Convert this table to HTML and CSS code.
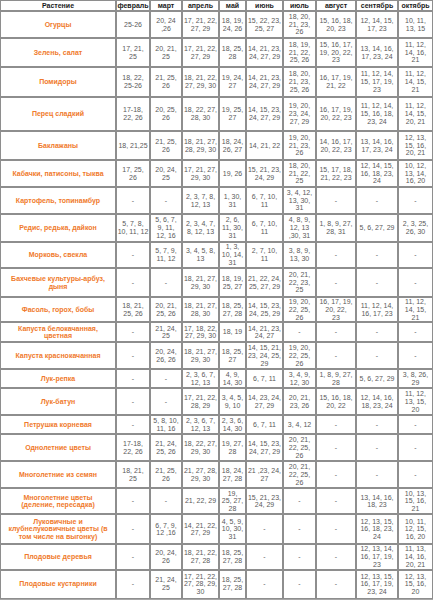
FILE: index.html
```html
<!DOCTYPE html>
<html lang="ru">
<head>
<meta charset="utf-8">
<title>Лунный календарь посева</title>
<link rel="stylesheet" href="styles.css">
</head>
<body>
<table class="cal">
<colgroup>
<col class="w0"><col class="w1"><col class="w2"><col class="w3"><col class="w4"><col class="w5"><col class="w6"><col class="w7"><col class="w8"><col class="w9">
</colgroup>
<thead>
<tr class="h11"><th>Растение</th><th>февраль</th><th>март</th><th>апрель</th><th>май</th><th>июнь</th><th>июль</th><th>август</th><th>сентябрь</th><th>октябрь</th></tr>
</thead>
<tbody>
<tr class="h27"><td class="p">Огурцы</td><td>25-26</td><td>20, 24<br>,26</td><td>17, 21, 22,<br>27, 29</td><td>18, 19,<br>24, 26</td><td>15, 22, 23,<br>25, 27</td><td>18, 20,<br>21, 23,<br>26</td><td>15, 16, 18,<br>20, 23</td><td>12, 14, 15,<br>17, 23</td><td>10, 11,<br>13, 15</td></tr>
<tr class="h29"><td class="p">Зелень, салат</td><td>17, 21,<br>25</td><td>20, 21,<br>25</td><td>17, 21, 22,<br>27, 29</td><td>18, 25,<br>28</td><td>14, 21, 23,<br>24, 27, 29</td><td>18, 19,<br>21, 22,<br>25, 26</td><td>15, 16, 17,<br>19, 20, 22,<br>23</td><td>13, 14, 16,<br>17, 23, 24</td><td>11, 12,<br>14, 16,<br>21</td></tr>
<tr class="h30"><td class="p">Помидоры</td><td>18, 22,<br>25-26</td><td>21, 25,<br>26</td><td>18, 21, 22,<br>27, 29, 30</td><td>19, 24,<br>27</td><td>14, 21, 23,<br>24, 27, 29</td><td>18, 20,<br>21, 23,<br>25, 26</td><td>16, 17, 19,<br>21, 22</td><td>11, 12, 14,<br>15, 17, 19,<br>23</td><td>11, 12,<br>14, 15,<br>21</td></tr>
<tr class="h34"><td class="p">Перец сладкий</td><td>17-18,<br>22, 26</td><td>20, 25,<br>26</td><td>18, 22, 27,<br>28, 30</td><td>19, 25,<br>27</td><td>14, 15, 23,<br>24, 27, 29</td><td>19, 20,<br>23, 24,<br>27, 29</td><td>16, 17, 19,<br>20, 22, 23</td><td>11, 12, 14,<br>15, 16, 18,<br>23, 24</td><td>11, 12,<br>14, 15,<br>20, 21</td></tr>
<tr class="h29"><td class="p">Баклажаны</td><td>18, 21,25</td><td>21, 25,<br>26</td><td>18, 21, 27,<br>28, 29, 30</td><td>18, 24,<br>26, 27</td><td>14, 21, 22</td><td>19, 20,<br>21, 23,<br>26</td><td>14, 16, 17,<br>20, 22, 23</td><td>13, 14, 16,<br>17, 23, 24</td><td>12, 13,<br>15, 16,<br>20, 21</td></tr>
<tr class="h27"><td class="p">Кабачки, патисоны, тыква</td><td>17, 25,<br>26</td><td>20, 24,<br>25</td><td>17, 21, 27,<br>29, 30</td><td>19, 26</td><td>15, 21, 23,<br>24, 29</td><td>18, 20,<br>21, 22,<br>25</td><td>15, 17, 18,<br>21, 22, 23</td><td>12, 14, 15,<br>16, 18, 23,<br>24</td><td>10, 12,<br>13, 14,<br>16, 20</td></tr>
<tr class="h27"><td class="p">Картофель, топинамбур</td><td>-</td><td>-</td><td>2, 3, 7, 8,<br>12, 13</td><td>1, 30,<br>31</td><td>6, 7, 10,<br>11</td><td>3, 4, 12,<br>13, 30,<br>31</td><td>-</td><td>-</td><td>-</td></tr>
<tr class="h28"><td class="p">Редис, редька, дайкон</td><td>5, 7, 8,<br>10, 11, 12</td><td>5, 6, 7,<br>9, 11,<br>12, 16</td><td>2, 3, 4, 7,<br>8, 12, 13</td><td>2, 6,<br>11, 30,<br>31</td><td>6, 7, 10,<br>11</td><td>4, 8, 9,<br>12, 13<br>,30, 31</td><td>1, 8, 9, 27,<br>28, 31</td><td>5, 6, 27, 29</td><td>2, 3, 25,<br>26, 30</td></tr>
<tr class="h26"><td class="p">Морковь, свекла</td><td>-</td><td>5, 7, 9,<br>11, 12</td><td>3, 4, 5, 8,<br>13</td><td>1, 3,<br>10, 14,<br>31</td><td>2, 7, 10,<br>11</td><td>3, 8, 9,<br>13, 30</td><td>-</td><td>-</td><td>-</td></tr>
<tr class="h29"><td class="p">Бахчевые культуры-арбуз,<br>дыня</td><td>-</td><td>-</td><td>18, 21, 27,<br>29, 30</td><td>18, 19,<br>25, 27</td><td>21, 22, 24,<br>25, 27, 29</td><td>20, 21,<br>22, 23,<br>25</td><td>-</td><td>-</td><td>-</td></tr>
<tr class="h24"><td class="p">Фасоль, горох, бобы</td><td>18, 21,<br>25, 26</td><td>20, 21,<br>25, 26</td><td>18, 21, 27,<br>28, 30</td><td>18, 25,<br>27, 28</td><td>14, 15, 23,<br>24, 25, 29</td><td>19, 20,<br>22, 25,<br>26</td><td>16, 17, 19,<br>20, 22,<br>23</td><td>11, 12, 14,<br>16, 17, 23</td><td>11, 12,<br>14, 15,<br>21</td></tr>
<tr class="h20"><td class="p">Капуста белокачанная,<br>цветная</td><td>-</td><td>21, 24,<br>25</td><td>17, 18, 22,<br>27, 29, 30</td><td>18, 19</td><td>14, 21, 23,<br>24, 27</td><td>-</td><td>-</td><td>-</td><td>-</td></tr>
<tr class="h27"><td class="p">Капуста краснокачанная</td><td>-</td><td>20, 24,<br>26, 26</td><td>18, 21, 27,<br>29, 30</td><td>18, 25,<br>27</td><td>14, 15, 21,<br>23, 24, 25,<br>29</td><td>19, 20,<br>22, 25,<br>26</td><td>-</td><td>-</td><td>-</td></tr>
<tr class="h19"><td class="p">Лук-репка</td><td>-</td><td>-</td><td>2, 3, 6, 7,<br>12, 13</td><td>4, 9,<br>14, 30</td><td>6, 7, 11</td><td>3, 4, 9,<br>12, 30</td><td>1, 8, 9, 27,<br>28</td><td>5, 6, 27, 29</td><td>3, 8, 26,<br>29</td></tr>
<tr class="h27"><td class="p">Лук-батун</td><td>-</td><td>-</td><td>17, 21, 22,<br>28, 29</td><td>3, 4, 5,<br>9, 10</td><td>14, 23, 24,<br>27, 29</td><td>20, 21,<br>23, 26</td><td>15, 16, 18,<br>20, 22</td><td>12, 14, 16,<br>18, 23, 24</td><td>11, 12,<br>13, 15,<br>20</td></tr>
<tr class="h19"><td class="p">Петрушка корневая</td><td>-</td><td>5, 8, 10,<br>11, 16</td><td>2, 3, 6, 7,<br>12, 13</td><td>2, 3, 6,<br>14, 30</td><td>6, 7, 11</td><td>3, 4, 12</td><td>-</td><td>-</td><td>-</td></tr>
<tr class="h27"><td class="p">Однолетние цветы</td><td>17-18,<br>22, 26</td><td>21, 24,<br>25, 26</td><td>18, 22, 27,<br>29, 30</td><td>19, 27,<br>28</td><td>14, 15, 23,<br>24, 27, 29</td><td>20, 21,<br>22, 25,<br>26</td><td>-</td><td>-</td><td>-</td></tr>
<tr class="h27"><td class="p">Многолетние из семян</td><td>18, 21,<br>25</td><td>21, 25,<br>26</td><td>21, 27, 28,<br>29, 30</td><td>18, 24,<br>27, 28</td><td>21 ,23, 24,<br>27</td><td>20, 21,<br>22, 25,<br>26</td><td>-</td><td>-</td><td>-</td></tr>
<tr class="h26"><td class="p">Многолетние цветы<br>(деление, пересадка)</td><td>-</td><td>-</td><td>21, 22, 29</td><td>19,<br>25, 27,<br>28</td><td>15, 21, 23,<br>24, 29</td><td>-</td><td>-</td><td>13, 14, 16,<br>18, 23</td><td>10, 13,<br>15, 16,<br>21</td></tr>
<tr class="h30"><td class="p">Луковичные и<br>клубнелуковичные цветы (в<br>том числе на выгонку)</td><td>-</td><td>6, 7, 9,<br>12 ,16</td><td>14, 21, 22,<br>27, 29</td><td>4, 5, 9,<br>10, 30,<br>31</td><td>-</td><td>-</td><td>-</td><td>12, 13, 15,<br>16, 18, 23,<br>24</td><td>10, 11,<br>12, 15,<br>16, 20</td></tr>
<tr class="h25"><td class="p">Плодовые деревья</td><td>-</td><td>20, 24,<br>26</td><td>18, 21, 22,<br>27, 28</td><td>18, 25,<br>27, 28</td><td>-</td><td>-</td><td>-</td><td>12, 13, 14,<br>16, 17, 19,<br>23</td><td>11, 13,<br>14, 16,<br>20, 21</td></tr>
<tr class="h29"><td class="p">Плодовые кустарники</td><td>-</td><td>21, 24,<br>25</td><td>17, 21, 22,<br>27, 28, 29,<br>30</td><td>18, 25,<br>27, 28</td><td>-</td><td>-</td><td>-</td><td>12, 13, 15,<br>16, 17, 19,<br>23, 24</td><td>12, 13,<br>15, 16,<br>20</td></tr>
</tbody>
</table>
</body>
</html>
```
FILE: styles.css
```css
html, body {
  margin: 0;
  padding: 0;
  background: #ffffff;
}
.cal {
  width: 433px;
  table-layout: fixed;
  border-collapse: separate;
  border-spacing: 0;
  border-bottom: 2px solid #a8a8a8;
  font-family: "Liberation Sans", Arial, sans-serif;
  font-size: 7px;
  line-height: 7.8px;
}
.w0 { width: 116px; }
.w1 { width: 34px; }
.w2 { width: 32px; }
.w3 { width: 37px; }
.w4 { width: 27px; }
.w5 { width: 37px; }
.w6 { width: 33px; }
.w7 { width: 40px; }
.w8 { width: 42px; }
.w9 { width: 35px; }
.cal th, .cal td {
  border: 1px solid #8e8e8e;
  padding: 0;
  text-align: center;
  vertical-align: middle;
  white-space: nowrap;
  overflow: hidden;
}
.cal th {
  color: #1a1a1a;
  font-weight: bold;
}
.cal td {
  color: #5a5a5a;
}
.cal td.p {
  color: #f07a2c;
  font-weight: bold;
}
.h11 { height: 11px; }
.h19 { height: 19px; }
.h20 { height: 20px; }
.h24 { height: 24px; }
.h25 { height: 25px; }
.h26 { height: 26px; }
.h27 { height: 27px; }
.h28 { height: 28px; }
.h29 { height: 29px; }
.h30 { height: 30px; }
.h34 { height: 34px; }
```
